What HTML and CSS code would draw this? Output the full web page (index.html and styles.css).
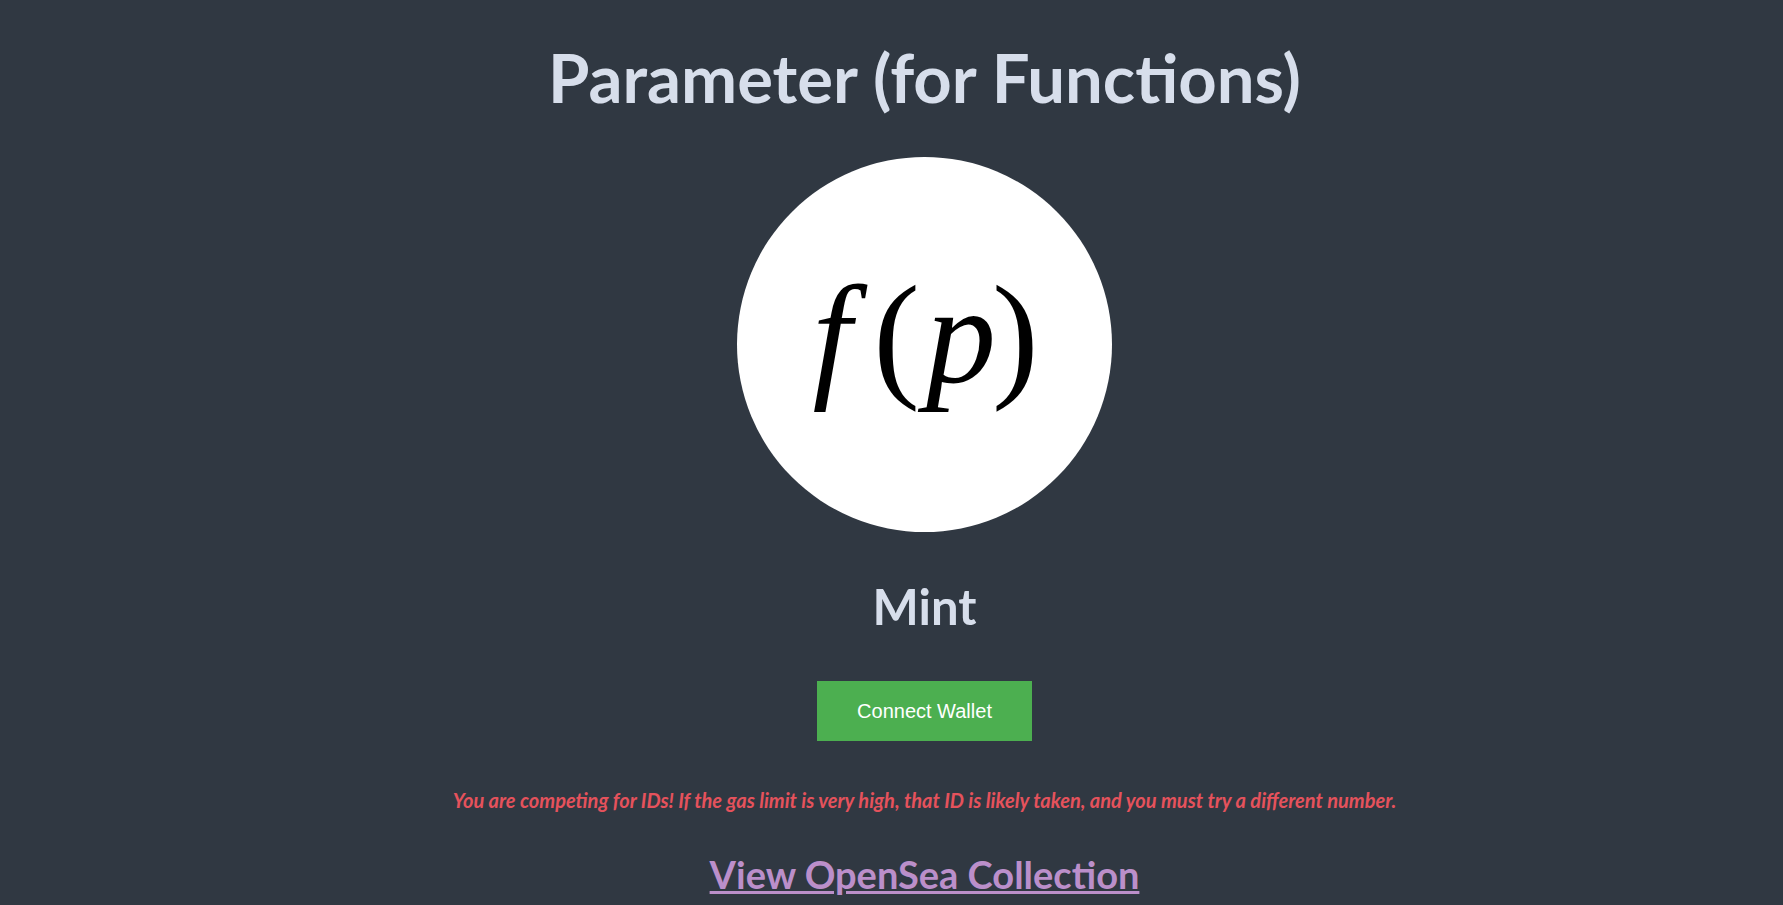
FILE: index.html
```html
<!DOCTYPE html>
<html lang="en">
<head>
<meta charset="utf-8">
<title>Parameter (for Functions)</title>
<link rel="stylesheet" href="styles.css">
</head>
<body>
<main class="page">
  <h1 class="title">Parameter (for Functions)</h1>
  <div class="logo"><span class="fx"><span class="it f">f</span><span class="par">(</span><span class="it p">p</span><span class="par">)</span></span></div>
  <h2 class="mint">Mint</h2>
  <button class="connect">Connect Wallet</button>
  <p class="warning">You are competing for IDs! If the gas limit is very high, that ID is likely taken, and you must try a different number.</p>
  <a class="opensea" href="#">View OpenSea Collection</a>
</main>
</body>
</html>
```
FILE: styles.css
```css
html, body {
  margin: 0;
  padding: 0;
  background: #303842;
  height: 100%;
  overflow: hidden;
}
.page {
  display: flex;
  flex-direction: column;
  align-items: center;
  padding-left: 66px;
  font-family: Lato, "Noto Sans", sans-serif;
  color: #d7deeb;
}
.title {
  margin: 37px 0 0;
  font-size: 67px;
  line-height: 1.2;
  font-weight: 700;
}
.logo {
  margin-top: 40px;
  width: 375px;
  height: 375px;
  border-radius: 50%;
  background: #ffffff;
  display: flex;
  align-items: center;
  justify-content: center;
}
.fx {
  font-family: "Liberation Serif", "DejaVu Serif", serif;
  font-size: 140px;
  color: #000;
  line-height: 1;
  margin-top: -20px;
  margin-left: 2px;
  display: flex;
  align-items: baseline;
}
.it {
  font-style: italic;
}
.f {
  margin-right: 22px;
}
.p {
  margin: 0 -4px 0 6px;
}
.par {
  font-weight: 400;
}
.mint {
  margin: 45px 0 0;
  font-size: 49px;
  line-height: 1.2;
  font-weight: 700;
}
.connect {
  margin-top: 45px;
  width: 215px;
  height: 60px;
  border: none;
  background: #4caf50;
  color: #ffffff;
  font-family: "Liberation Sans", Arial, sans-serif;
  font-size: 20px;
  padding: 0;
}
.warning {
  margin: 47px 0 0;
  font-size: 20px;
  line-height: 1.2;
  font-style: italic;
  font-weight: 700;
  color: #e5525c;
}
.opensea {
  margin-top: 40px;
  font-size: 38px;
  line-height: 1.2;
  font-weight: 700;
  color: #bb8fca;
  text-decoration: underline;
}
```
